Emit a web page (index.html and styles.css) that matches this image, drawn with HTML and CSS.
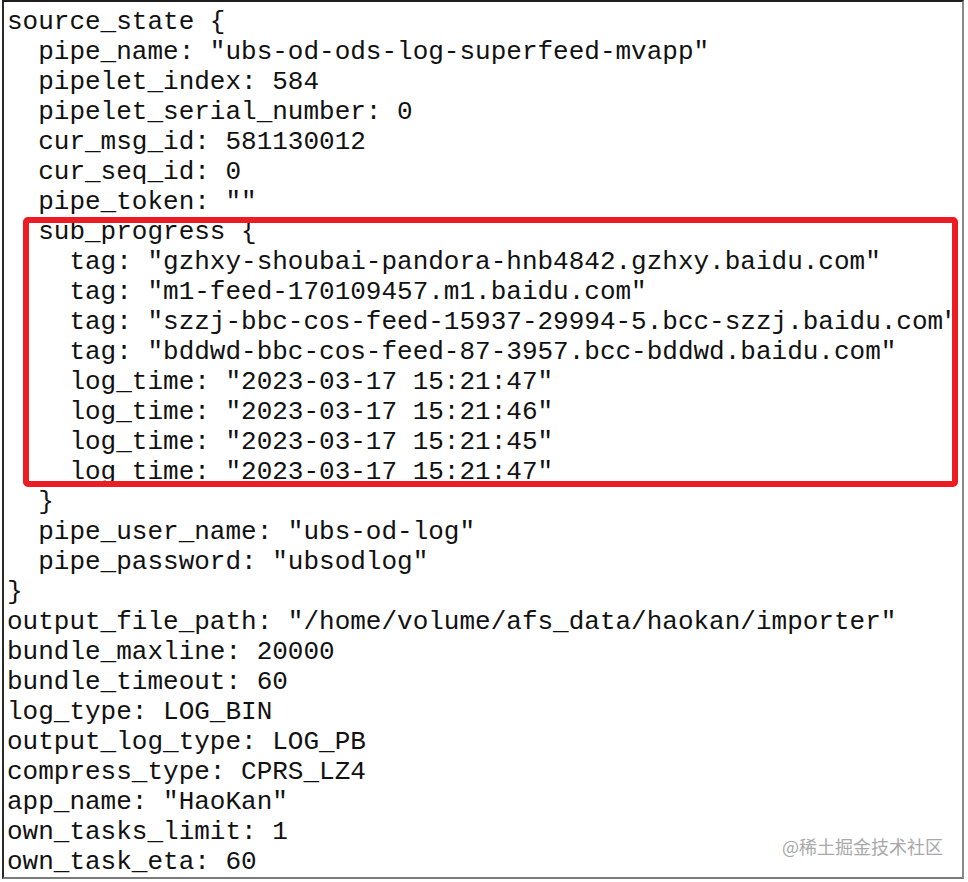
FILE: index.html
```html
<!DOCTYPE html>
<html lang="zh">
<head>
<meta charset="utf-8">
<title>source_state</title>
<link rel="stylesheet" href="styles.css">
</head>
<body>
<div class="frame">
<div class="code">
<div class="ln">source_state {</div>
<div class="ln">  pipe_name: "ubs-od-ods-log-superfeed-mvapp"</div>
<div class="ln">  pipelet_index: 584</div>
<div class="ln">  pipelet_serial_number: 0</div>
<div class="ln">  cur_msg_id: 581130012</div>
<div class="ln">  cur_seq_id: 0</div>
<div class="ln">  pipe_token: ""</div>
<div class="ln">  sub_progress {</div>
<div class="ln">    tag: "gzhxy-shoubai-pandora-hnb4842.gzhxy.baidu.com"</div>
<div class="ln">    tag: "m1-feed-170109457.m1.baidu.com"</div>
<div class="ln">    tag: "szzj-bbc-cos-feed-15937-29994-5.bcc-szzj.baidu.com"</div>
<div class="ln">    tag: "bddwd-bbc-cos-feed-87-3957.bcc-bddwd.baidu.com"</div>
<div class="ln">    log_time: "2023-03-17 15:21:47"</div>
<div class="ln">    log_time: "2023-03-17 15:21:46"</div>
<div class="ln">    log_time: "2023-03-17 15:21:45"</div>
<div class="ln">    log_time: "2023-03-17 15:21:47"</div>
<div class="ln">  }</div>
<div class="ln">  pipe_user_name: "ubs-od-log"</div>
<div class="ln">  pipe_password: "ubsodlog"</div>
<div class="ln">}</div>
<div class="ln">output_file_path: "/home/volume/afs_data/haokan/importer"</div>
<div class="ln">bundle_maxline: 20000</div>
<div class="ln">bundle_timeout: 60</div>
<div class="ln">log_type: LOG_BIN</div>
<div class="ln">output_log_type: LOG_PB</div>
<div class="ln">compress_type: CPRS_LZ4</div>
<div class="ln">app_name: "HaoKan"</div>
<div class="ln">own_tasks_limit: 1</div>
<div class="ln">own_task_eta: 60</div>
</div>
<div class="highlight"></div>
<div class="watermark">@稀土掘金技术社区</div>
</div>
</body>
</html>
```
FILE: styles.css
```css
html, body {
  margin: 0;
  padding: 0;
  background: #ffffff;
}

.frame {
  position: relative;
  box-sizing: border-box;
  width: 962px;
  height: 879px;
  margin-left: 2px;
  border-top: 2px solid #1e1e1e;
  border-left: 2px solid #2a2a2a;
  border-right: 2px solid #8a8a8a;
  border-bottom: 2px solid #7a7a7a;
  overflow: hidden;
  background: #ffffff;
}

.code {
  display: flex;
  flex-direction: column;
  align-items: flex-start;
  padding: 5px 0 0 3px;
  font-family: "Liberation Mono", "Courier New", monospace;
  font-size: 26px;
  line-height: 30px;
  color: #111111;
}

.ln {
  white-space: pre;
  width: max-content;
}

.highlight {
  position: absolute;
  left: 19px;
  top: 215px;
  width: 935px;
  height: 270px;
  box-sizing: border-box;
  border: 6px solid #ec1c24;
  border-radius: 5px;
}

.watermark {
  position: absolute;
  left: 778px;
  top: 833px;
  font-family: "Noto Sans CJK SC", "Noto Sans", sans-serif;
  font-size: 18px;
  line-height: 22px;
  color: #a8a8a8;
}
```
